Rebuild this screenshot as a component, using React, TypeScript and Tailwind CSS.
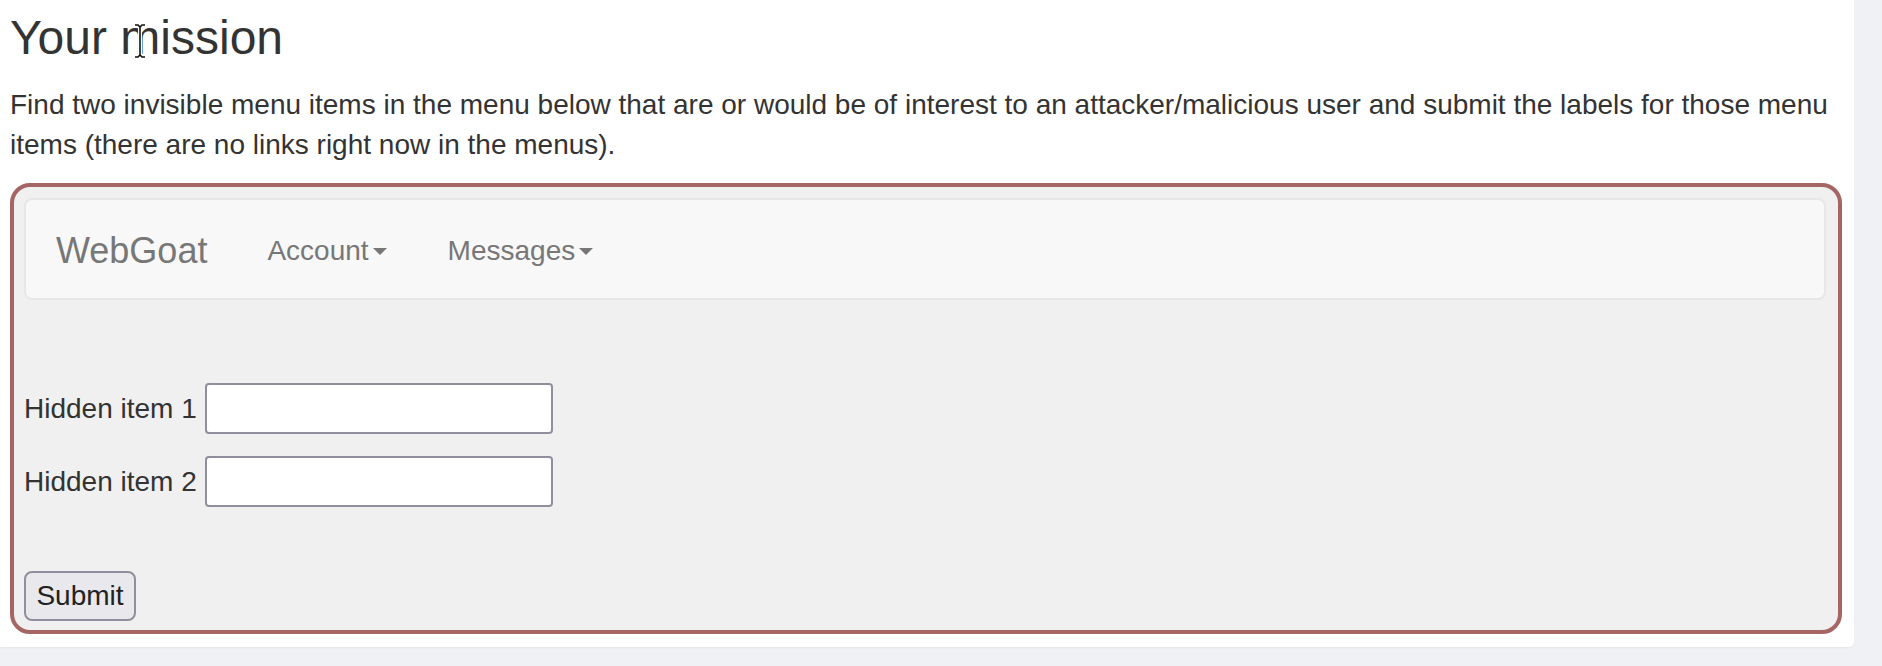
function Caret() {
  return (
    <span className="ml-[4px] inline-block h-0 w-0 border-x-[7px] border-t-[7px] border-x-transparent border-t-[#777] align-middle" />
  );
}

function TextCursor() {
  // mouse I-beam sitting over the heading
  return (
    <svg
      className="pointer-events-none absolute left-[133px] top-[23px]"
      width="14"
      height="36"
      viewBox="0 0 14 36"
    >
      <path
        d="M2 2h3l2 2 2-2h3M7 4v28M2 34h3l2-2 2 2h3"
        fill="none"
        stroke="#fff"
        strokeWidth="4"
        strokeLinecap="round"
      />
      <path
        d="M2 2h3l2 2 2-2h3M7 4v28M2 34h3l2-2 2 2h3"
        fill="none"
        stroke="#111"
        strokeWidth="1.6"
      />
    </svg>
  );
}

export default function App() {
  return (
    <div className="min-h-[666px] bg-[#eff1f5] font-['Liberation_Sans',Arial,sans-serif] text-[#333]">
      <div className="relative w-[1854px] rounded-br-[5px] bg-white pb-[13px] pl-[10px] pr-[12px] pt-[11px] shadow-[0_1px_2px_rgba(0,0,0,0.05)]">
        <h3 className="text-[48px] font-normal leading-[53px]">Your mission</h3>
        <TextCursor />
        <p className="mt-[21px] text-[28px] leading-[40px]">
          Find two invisible menu items in the menu below that are or would be of interest to an
          attacker/malicious user and submit the labels for those menu items (there are no links
          right now in the menus).
        </p>

        <div className="mt-[18px] rounded-[20px] border-4 border-[#a66565] bg-[#f0f0f0] pb-[9px] pl-[10px] pr-[12px] pt-[11px]">
          {/* Navbar */}
          <nav className="flex h-[102px] items-center rounded-[8px] border-2 border-[#e7e7e7] bg-[#f8f8f8] pl-[30px] pt-[4px]">
            <span className="text-[36px] leading-[40px] text-[#777]">WebGoat</span>
            <span className="ml-[60px] flex items-center text-[28px] leading-[40px] text-[#777]">
              Account
              <Caret />
            </span>
            <span className="ml-[61px] flex items-center text-[28px] leading-[40px] text-[#777]">
              Messages
              <Caret />
            </span>
          </nav>

          {/* Form */}
          <form className="mt-[83px] flex flex-col items-start">
            <div className="flex items-center gap-[8px]">
              <label className="text-[28px] leading-[40px]">Hidden item 1</label>
              <input
                type="text"
                className="h-[51px] w-[348px] rounded-[4px] border-2 border-[#8f8f9d] bg-white px-[4px] text-[28px]"
              />
            </div>
            <div className="mt-[22px] flex items-center gap-[8px]">
              <label className="text-[28px] leading-[40px]">Hidden item 2</label>
              <input
                type="text"
                className="h-[51px] w-[348px] rounded-[4px] border-2 border-[#8f8f9d] bg-white px-[4px] text-[28px]"
              />
            </div>
            <button
              type="button"
              className="mt-[64px] h-[50px] w-[112px] rounded-[8px] border-2 border-[#8f8f9d] bg-[#e9e9ed] text-[28px] leading-[40px] text-[#222]"
            >
              Submit
            </button>
          </form>
        </div>
      </div>
    </div>
  );
}
